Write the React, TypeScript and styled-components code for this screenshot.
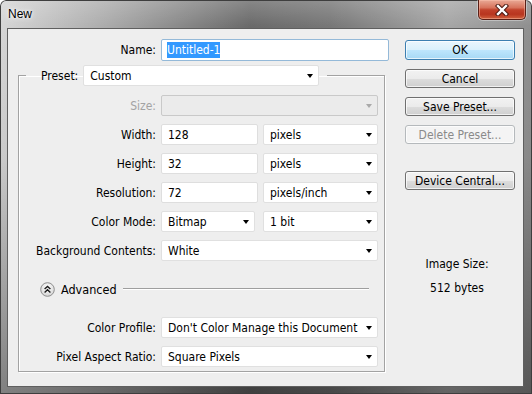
import React from 'react';
import styled, { createGlobalStyle } from 'styled-components';

const GlobalStyle = createGlobalStyle`
  html, body {
    margin: 0;
    padding: 0;
    background: #ffffff;
  }
  body {
    font-family: "DejaVu Sans Condensed", "DejaVu Sans", "Liberation Sans", sans-serif;
    font-stretch: condensed;
    font-size: 12px;
    color: #000;
  }
`;

const Window = styled.div`
  width: 532px;
  height: 394px;
  box-sizing: border-box;
  display: flex;
  flex-direction: column;
  padding: 0 8px 7px 7px;
  border-radius: 6px 6px 0 0;
  background:
    linear-gradient(to bottom, rgba(255, 255, 255, 0.2) 0, rgba(255, 255, 255, 0) 26px, rgba(0, 0, 0, 0.05) 40%, rgba(0, 0, 0, 0.4) 100%),
    linear-gradient(to right, #d6d6d6 0%, #ababab 20%, #6a6a6a 47%, #777 62%, #a6a6a6 84%, #8f8f8f 100%);
  box-shadow: inset 0 0 0 1px #3e3e3e;
`;

const TitleBar = styled.div`
  height: 28px;
  display: flex;
  justify-content: space-between;
  align-items: flex-start;
`;

const Title = styled.div`
  font-family: "Liberation Sans", Arial, sans-serif;
  font-stretch: normal;
  font-size: 12px;
  padding: 7px 0 0 1px;
  text-shadow: 0 0 6px #fff, 0 0 3px #fff;
`;

const CloseButton = styled.div`
  width: 48px;
  height: 20px;
  box-sizing: border-box;
  margin-right: -2px;
  display: flex;
  align-items: center;
  justify-content: center;
  border: 1px solid #5a1f16;
  border-top: none;
  border-radius: 0 0 5px 5px;
  background: linear-gradient(to bottom, #e9a996 0%, #d7735c 40%, #c1412a 52%, #b8351f 75%, #d0613e 100%);
  box-shadow: inset 0 0 0 1px rgba(255, 200, 180, 0.45), 0 0 0 1px rgba(255, 255, 255, 0.35);
`;

const Client = styled.div`
  flex: 1;
  display: flex;
  border: 1px solid #5f5f5f;
  background: #eeeeee;
`;

const LeftPane = styled.div`
  width: 381px;
  padding: 10px 0 0 10px;
  box-sizing: border-box;
  display: flex;
  flex-direction: column;
`;

const NameRow = styled.div`
  display: grid;
  grid-template-columns: 138px 228px;
  column-gap: 5px;
  align-items: center;
`;

const Label = styled.div<{ $disabled?: boolean }>`
  text-align: right;
  white-space: nowrap;
  color: ${p => (p.$disabled ? '#a3a3a3' : '#000')};
`;

const TextField = styled.div<{ $focused?: boolean }>`
  height: 22px;
  box-sizing: border-box;
  display: flex;
  align-items: center;
  padding-left: 5px;
  background: #fff;
  border: 1px solid ${p => (p.$focused ? '#94b9d8' : '#dedede')};
  border-radius: 2px;
  white-space: nowrap;
`;

const Selected = styled.span`
  background: #3399ff;
  color: #fff;
  padding: 1px 0;
`;

const Group = styled.fieldset`
  margin: 4px 0 0 0;
  width: 367px;
  box-sizing: border-box;
  padding: 9px 6px 4px 7px;
  border: 1px solid #a2a2a2;
  box-shadow: 1px 1px 0 #ffffff, inset 1px 1px 0 #ffffff;
  display: grid;
  grid-template-columns: 130px 217px;
  column-gap: 5px;
  row-gap: 8px;
  align-items: center;
`;

const Legend = styled.legend`
  display: flex;
  align-items: center;
  gap: 5px;
  padding: 0 8px 0 15px;
  margin: 0;
`;

const Select = styled.div<{ $disabled?: boolean; $width?: number }>`
  position: relative;
  height: 21px;
  width: ${p => (p.$width ? `${p.$width}px` : 'auto')};
  box-sizing: border-box;
  display: flex;
  align-items: center;
  padding-left: 6px;
  background: ${p => (p.$disabled ? '#ebebeb' : '#fff')};
  border: 1px solid ${p => (p.$disabled ? '#c9c9c9' : '#e0e0e0')};
  border-radius: 2px;
  white-space: nowrap;
  overflow: hidden;

  &::after {
    content: '';
    position: absolute;
    right: 5px;
    top: 8px;
    border-left: 3.5px solid transparent;
    border-right: 3.5px solid transparent;
    border-top: 4px solid ${p => (p.$disabled ? '#a9a9a9' : '#000')};
  }
`;

const Input = styled(TextField)`
  height: 21px;
  padding-left: 6px;
`;

const FieldPair = styled.div<{ $first: number }>`
  display: grid;
  grid-template-columns: ${p => p.$first}px 115px;
  justify-content: space-between;
`;

const AdvancedRow = styled.div`
  grid-column: 1 / -1;
  margin: 12px 9px 12px 14px;
  height: 16px;
  display: flex;
  align-items: center;
  gap: 6px;
`;

const AdvancedText = styled.span`
  font-size: 12.5px;
`;

const Rule = styled.div`
  flex: 1;
  height: 0;
  border-top: 1px solid #9e9e9e;
  border-bottom: 1px solid #fff;
`;

const RightPane = styled.div`
  margin-left: 16px;
  width: 110px;
  padding-top: 11px;
  display: flex;
  flex-direction: column;
  gap: 9px;
`;

const Button = styled.div<{ $variant?: 'default' | 'disabled'; $spaced?: boolean }>`
  height: ${p => (p.$variant === 'default' ? '20px' : '19px')};
  box-sizing: border-box;
  margin-top: ${p => (p.$spaced ? '18px' : '0')};
  display: flex;
  align-items: center;
  justify-content: center;
  border-radius: 3px;
  white-space: nowrap;
  border: 1px solid
    ${p => (p.$variant === 'default' ? '#3c7fb1' : p.$variant === 'disabled' ? '#b5b9bc' : '#707070')};
  color: ${p => (p.$variant === 'disabled' ? '#8a8a8a' : '#000')};
  background: ${p =>
    p.$variant === 'default'
      ? 'linear-gradient(to bottom, #eaf6fd 0%, #d9f0fc 50%, #bee6fd 51%, #a7d9f5 100%)'
      : p.$variant === 'disabled'
      ? '#f4f4f4'
      : 'linear-gradient(to bottom, #f2f2f2 0%, #ebebeb 50%, #dddddd 51%, #cfcfcf 100%)'};
  box-shadow: inset 0 0 0 1px rgba(255, 255, 255, 0.7);
`;

const Info = styled.div`
  margin-top: 58px;
  padding-right: 6px;
  display: flex;
  flex-direction: column;
  align-items: center;
  gap: 10px;
  line-height: 14px;
`;

function AdvancedIcon() {
  return (
    <svg width="15" height="15" viewBox="0 0 15 15">
      <defs>
        <radialGradient id="adv" cx="50%" cy="35%" r="65%">
          <stop offset="0" stopColor="#ffffff" />
          <stop offset="1" stopColor="#d4d4d4" />
        </radialGradient>
      </defs>
      <circle cx="7.5" cy="7.5" r="6.8" fill="url(#adv)" stroke="#8e8e8e" />
      <path d="M4.6 7 L7.5 4.4 L10.4 7 M4.6 10.4 L7.5 7.8 L10.4 10.4" fill="none" stroke="#1a1a1a" strokeWidth="1.4" />
    </svg>
  );
}

function CloseGlyph() {
  return (
    <svg width="14" height="12" viewBox="0 0 14 12">
      <path d="M3 2 L11 10 M11 2 L3 10" stroke="#4a1810" strokeWidth="4.4" strokeLinecap="square" />
      <path d="M3 2 L11 10 M11 2 L3 10" stroke="#ffffff" strokeWidth="2.4" strokeLinecap="square" />
    </svg>
  );
}

export default function App() {
  return (
    <>
      <GlobalStyle />
      <Window>
        <TitleBar>
          <Title>New</Title>
          <CloseButton>
            <CloseGlyph />
          </CloseButton>
        </TitleBar>
        <Client>
          <LeftPane>
            <NameRow>
              <Label>Name:</Label>
              <TextField $focused>
                <Selected>Untitled-1</Selected>
              </TextField>
            </NameRow>

            <Group>
              <Legend>
                <span>Preset:</span>
                <Select $width={236}>Custom</Select>
              </Legend>

              <Label $disabled>Size:</Label>
              <Select $disabled />

              <Label>Width:</Label>
              <FieldPair $first={97}>
                <Input>128</Input>
                <Select>pixels</Select>
              </FieldPair>

              <Label>Height:</Label>
              <FieldPair $first={97}>
                <Input>32</Input>
                <Select>pixels</Select>
              </FieldPair>

              <Label>Resolution:</Label>
              <FieldPair $first={97}>
                <Input>72</Input>
                <Select>pixels/inch</Select>
              </FieldPair>

              <Label>Color Mode:</Label>
              <FieldPair $first={94}>
                <Select>Bitmap</Select>
                <Select>1 bit</Select>
              </FieldPair>

              <Label>Background Contents:</Label>
              <Select>White</Select>

              <AdvancedRow>
                <AdvancedIcon />
                <AdvancedText>Advanced</AdvancedText>
                <Rule />
              </AdvancedRow>

              <Label>Color Profile:</Label>
              <Select>Don't Color Manage this Document</Select>

              <Label>Pixel Aspect Ratio:</Label>
              <Select>Square Pixels</Select>
            </Group>
          </LeftPane>

          <RightPane>
            <Button $variant="default">OK</Button>
            <Button>Cancel</Button>
            <Button>Save Preset...</Button>
            <Button $variant="disabled">Delete Preset...</Button>
            <Button $spaced>Device Central...</Button>
            <Info>
              <span>Image Size:</span>
              <span>512 bytes</span>
            </Info>
          </RightPane>
        </Client>
      </Window>
    </>
  );
}
